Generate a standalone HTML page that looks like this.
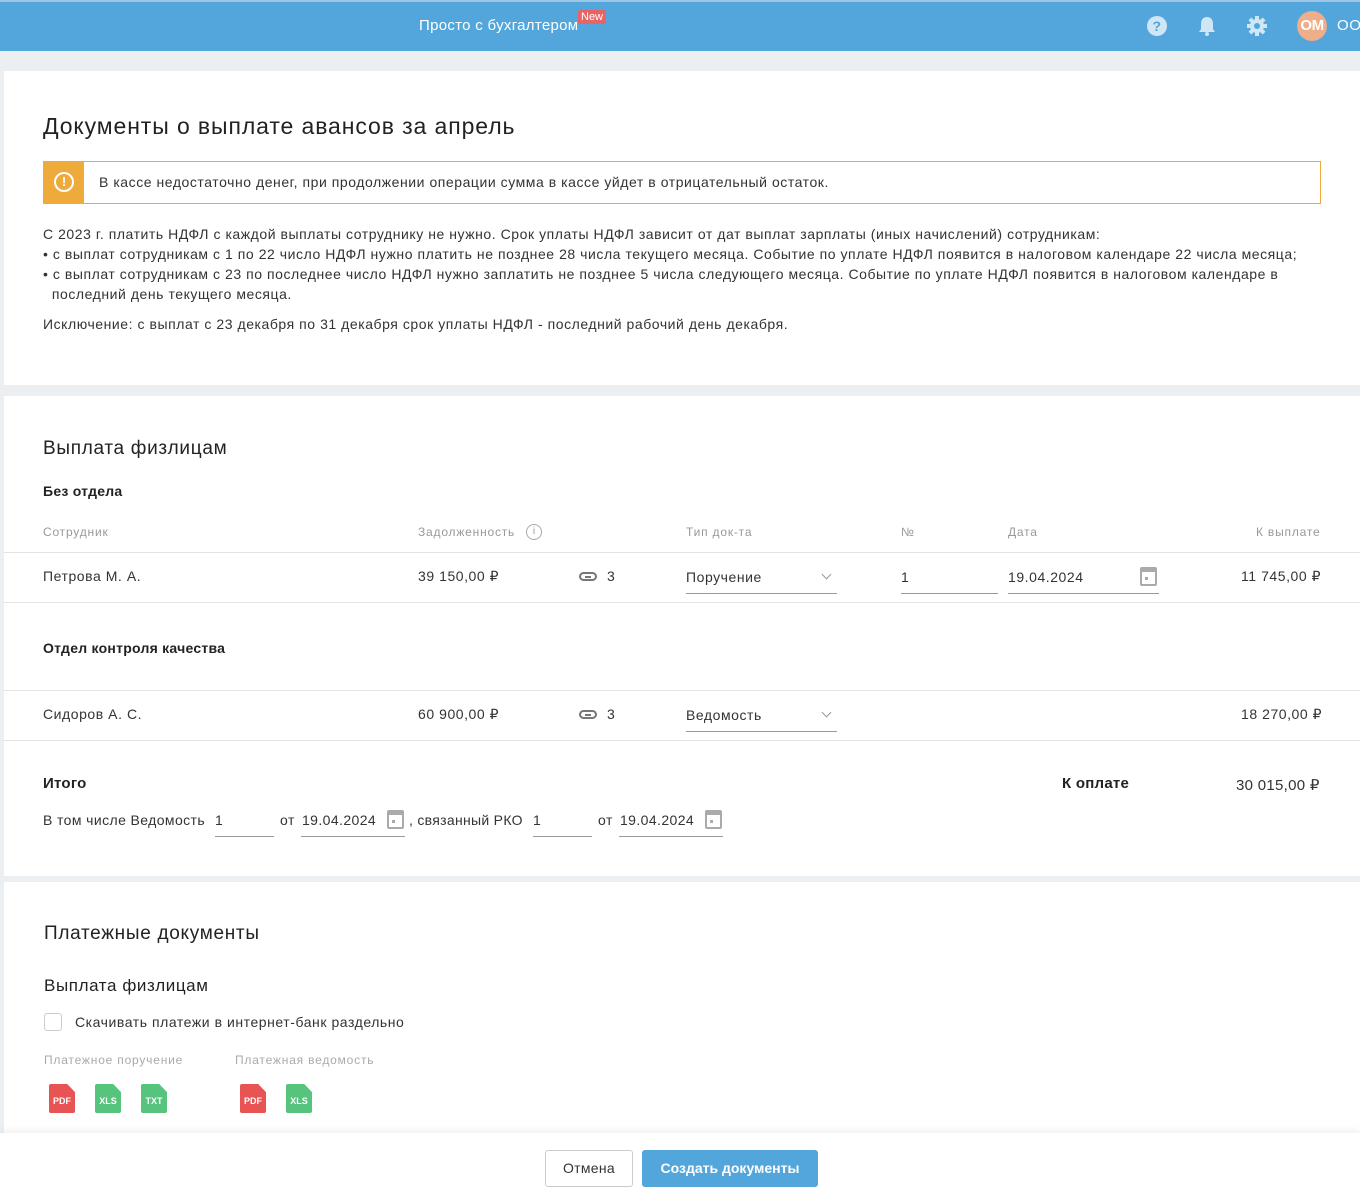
<!DOCTYPE html>
<html><head><meta charset="utf-8"><style>
*{box-sizing:border-box;margin:0;padding:0}
body{width:1360px;height:1195px;overflow:hidden;background:#ebeff2;font-family:"Liberation Sans",sans-serif;color:#333;font-size:14px;letter-spacing:0.55px;position:relative}
.a{position:absolute;white-space:nowrap}
.top{position:absolute;left:0;top:0;width:1360px;height:51px;background:#53a6dc;border-top:2px solid #9ec7e6}
.panel{position:absolute;left:4px;width:1356px;background:#fff}
.h1{font-size:23px;color:#222;letter-spacing:0.9px}
.h2{font-size:19px;color:#222;letter-spacing:0.7px}
.b{font-weight:bold;color:#222;letter-spacing:0.25px}
.lbl{font-size:12px;color:#999;letter-spacing:0.8px}
.line{position:absolute;height:1px;background:#e4e4e4}
.ul{position:absolute;height:1px;background:#999}
.cal{position:absolute;width:17px;height:19px;border-radius:2px;background:#aaa}
.cal::before{content:"";position:absolute;left:2px;top:5px;width:13px;height:12px;background:#fff}
.cal::after{content:"";position:absolute;left:5px;top:10px;width:3px;height:3px;background:#aaa}
.chev{position:absolute;width:7px;height:7px;border-right:1.5px solid #999;border-bottom:1.5px solid #999;transform:rotate(45deg)}
.file{position:absolute;width:26px;height:29px;border-radius:2px;color:#fff;font-size:9px;font-weight:bold;text-align:center;line-height:35px;letter-spacing:0;clip-path:polygon(0 0,70% 0,100% 28%,100% 100%,0 100%)}
.red{background:#e85353}.grn{background:#56c47c}
.link{position:absolute;width:18px;height:9px;border:2px solid #777;border-radius:5px}
.link::after{content:"";position:absolute;left:4px;top:1.5px;width:6px;height:2px;background:#777}
</style></head><body>
<div class="top">
 <div class="a" style="left:419px;top:15px;color:#fff;font-size:15px;letter-spacing:0.3px">Просто с бухгалтером</div>
 <div class="a" style="left:578px;top:8px;background:#e86464;color:#fff;font-size:11px;padding:1px 3px;border-radius:2px;letter-spacing:0">New</div>
 <svg class="a" style="left:1146px;top:13px" width="22" height="22"><circle cx="11" cy="11" r="10" fill="#cfe6f6"/><text x="11" y="16" font-size="14" font-weight="bold" text-anchor="middle" fill="#53a6dc" font-family="Liberation Sans">?</text></svg>
 <svg class="a" style="left:1197px;top:13px" width="20" height="22"><path d="M10 2c-4 0-6 3-6 7v5l-2 3h16l-2-3V9c0-4-2-7-6-7z" fill="#cfe6f6"/><circle cx="10" cy="19" r="2" fill="#cfe6f6"/></svg>
 <svg class="a" style="left:1246px;top:13px" width="22" height="22"><g fill="#cfe6f6"><circle cx="11" cy="11" r="7"/><rect x="9" y="1" width="4" height="20"/><rect x="1" y="9" width="20" height="4"/><rect x="9" y="1" width="4" height="20" transform="rotate(45 11 11)"/><rect x="9" y="1" width="4" height="20" transform="rotate(-45 11 11)"/></g><circle cx="11" cy="11" r="3" fill="#53a6dc"/></svg>
 <div class="a" style="left:1297px;top:9px;width:30px;height:30px;border-radius:50%;background:#efae8a;color:#fff;font-weight:bold;font-size:15px;text-align:center;line-height:30px;letter-spacing:-0.5px">ОМ</div>
 <div class="a" style="left:1337px;top:15px;color:#fff;font-size:15px">ООО</div>
</div>

<div class="panel" style="top:71px;height:314px">
 <div class="a h1" style="left:39px;top:42px">Документы о выплате авансов за апрель</div>
 <div class="a" style="left:39px;top:90px;width:1278px;height:43px;border:1px solid #eeaa3a"></div>
 <div class="a" style="left:39px;top:90px;width:41px;height:43px;background:#eeaa3a"></div>
 <div class="a" style="left:50px;top:101px;width:20px;height:20px;border:2px solid #fff;border-radius:50%;color:#fff;font-weight:bold;text-align:center;line-height:16px;font-size:13px;letter-spacing:0">!</div>
 <div class="a" style="left:95px;top:103px">В кассе недостаточно денег, при продолжении операции сумма в кассе уйдет в отрицательный остаток.</div>
 <div class="a" style="left:39px;top:153px;line-height:20px">С 2023 г. платить НДФЛ с каждой выплаты сотруднику не нужно. Срок уплаты НДФЛ зависит от дат выплат зарплаты (иных начислений) сотрудникам:<br>• с выплат сотрудникам с 1 по 22 число НДФЛ нужно платить не позднее 28 числа текущего месяца. Событие по уплате НДФЛ появится в налоговом календаре 22 числа месяца;<br>• с выплат сотрудникам с 23 по последнее число НДФЛ нужно заплатить не позднее 5 числа следующего месяца. Событие по уплате НДФЛ появится в налоговом календаре в<br>&nbsp;&nbsp;последний день текущего месяца.</div>
 <div class="a" style="left:39px;top:245px">Исключение: с выплат с 23 декабря по 31 декабря срок уплаты НДФЛ - последний рабочий день декабря.</div>
</div>

<div class="panel" style="top:396px;height:480px">
 <div class="a h2" style="left:39px;top:42px">Выплата физлицам</div>
 <div class="a b" style="left:39px;top:87px">Без отдела</div>
 <div class="a lbl" style="left:39px;top:129px">Сотрудник</div>
 <div class="a lbl" style="left:414px;top:129px">Задолженность</div>
 <div class="a" style="left:522px;top:128px;width:16px;height:16px;border:1px solid #aaa;border-radius:50%;font-size:10px;color:#999;text-align:center;line-height:14px;letter-spacing:0">i</div>
 <div class="a lbl" style="left:682px;top:129px">Тип док-та</div>
 <div class="a lbl" style="left:897px;top:129px">№</div>
 <div class="a lbl" style="left:1004px;top:129px">Дата</div>
 <div class="a lbl" style="left:1252px;top:129px">К выплате</div>
 <div class="line" style="left:0;top:156px;width:1356px"></div>
 <div class="a" style="left:39px;top:172px">Петрова М. А.</div>
 <div class="a" style="left:414px;top:172px">39 150,00 ₽</div>
 <div class="link" style="left:575px;top:176px"></div>
 <div class="a" style="left:603px;top:172px">3</div>
 <div class="a" style="left:682px;top:173px">Поручение</div>
 <div class="chev" style="left:819px;top:175px"></div>
 <div class="ul" style="left:682px;top:197px;width:151px"></div>
 <div class="a" style="left:897px;top:173px">1</div>
 <div class="ul" style="left:897px;top:197px;width:97px"></div>
 <div class="a" style="left:1004px;top:173px">19.04.2024</div>
 <div class="cal" style="left:1136px;top:171px"></div>
 <div class="ul" style="left:1004px;top:197px;width:151px"></div>
 <div class="a" style="left:1237px;top:172px">11 745,00 ₽</div>
 <div class="line" style="left:0;top:206px;width:1356px"></div>
 <div class="a b" style="left:39px;top:244px">Отдел контроля качества</div>
 <div class="line" style="left:0;top:294px;width:1356px"></div>
 <div class="a" style="left:39px;top:310px">Сидоров А. С.</div>
 <div class="a" style="left:414px;top:310px">60 900,00 ₽</div>
 <div class="link" style="left:575px;top:314px"></div>
 <div class="a" style="left:603px;top:310px">3</div>
 <div class="a" style="left:682px;top:311px">Ведомость</div>
 <div class="chev" style="left:819px;top:313px"></div>
 <div class="ul" style="left:682px;top:335px;width:151px"></div>
 <div class="a" style="left:1237px;top:310px">18 270,00 ₽</div>
 <div class="line" style="left:0;top:344px;width:1356px"></div>
 <div class="a b" style="left:39px;top:379px;font-size:15px">Итого</div>
 <div class="a b" style="left:1058px;top:379px;font-size:15px">К оплате</div>
 <div class="a" style="left:1232px;top:380px;font-size:15px;letter-spacing:0.3px">30 015,00 ₽</div>
 <div class="a" style="left:39px;top:416px;letter-spacing:0.4px">В том числе Ведомость</div>
 <div class="a" style="left:211px;top:416px">1</div>
 <div class="ul" style="left:211px;top:440px;width:59px"></div>
 <div class="a" style="left:276px;top:416px">от</div>
 <div class="a" style="left:298px;top:416px;letter-spacing:0.4px">19.04.2024</div>
 <div class="cal" style="left:383px;top:414px"></div>
 <div class="ul" style="left:297px;top:440px;width:104px"></div>
 <div class="a" style="left:405px;top:416px;letter-spacing:0.3px">, связанный РКО</div>
 <div class="a" style="left:529px;top:416px">1</div>
 <div class="ul" style="left:529px;top:440px;width:59px"></div>
 <div class="a" style="left:594px;top:416px">от</div>
 <div class="a" style="left:616px;top:416px;letter-spacing:0.4px">19.04.2024</div>
 <div class="cal" style="left:701px;top:414px"></div>
 <div class="ul" style="left:615px;top:440px;width:104px"></div>
</div>

<div class="panel" style="top:882px;height:313px">
 <div class="a h2" style="left:40px;top:41px">Платежные документы</div>
 <div class="a" style="left:40px;top:94px;font-size:17px;color:#222;letter-spacing:0.6px">Выплата физлицам</div>
 <div class="a" style="left:40px;top:131px;width:18px;height:18px;border:1px solid #ccc;border-radius:3px"></div>
 <div class="a" style="left:71px;top:132px">Скачивать платежи в интернет-банк раздельно</div>
 <div class="a lbl" style="left:40px;top:171px;color:#aaa">Платежное поручение</div>
 <div class="a lbl" style="left:231px;top:171px;color:#aaa">Платежная ведомость</div>
 <div class="file red" style="left:45px;top:202px">PDF</div>
 <div class="file grn" style="left:91px;top:202px">XLS</div>
 <div class="file grn" style="left:137px;top:202px">TXT</div>
 <div class="file red" style="left:236px;top:202px">PDF</div>
 <div class="file grn" style="left:282px;top:202px">XLS</div>
</div>
<div class="a" style="left:0;top:1133px;width:1360px;height:62px;background:#fff;box-shadow:0 -3px 6px rgba(0,0,0,0.06)">
 <div class="a" style="left:545px;top:17px;width:88px;height:37px;border:1px solid #ccc;border-radius:3px;text-align:center;line-height:35px;color:#333;letter-spacing:0.3px">Отмена</div>
 <div class="a" style="left:642px;top:17px;width:176px;height:37px;background:#53a6dc;border-radius:3px;text-align:center;line-height:37px;color:#fff;font-weight:bold;letter-spacing:0">Создать документы</div>
</div>
</body></html>
